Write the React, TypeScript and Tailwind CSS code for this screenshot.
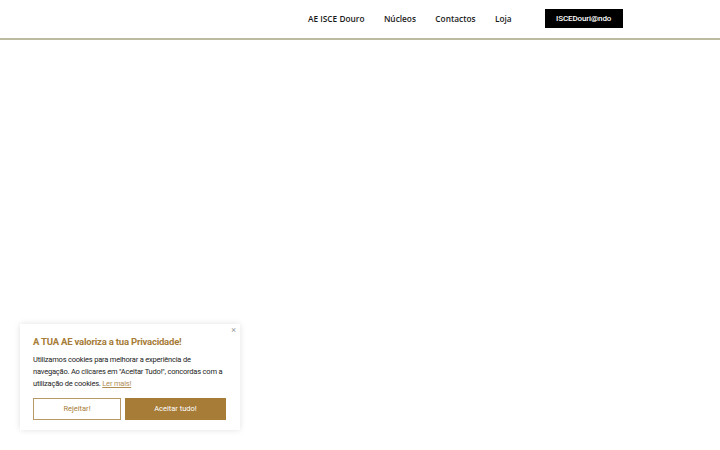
import React from 'react';

export default function App() {
  const nav = ['AE ISCE Douro', 'Núcleos', 'Contactos', 'Loja'];

  return (
    <div className="relative w-[720px] h-[450px] bg-white overflow-hidden font-['Roboto',sans-serif]">
      {/* header */}
      <header className="h-[40px] border-b-2 border-[#bcbb9f] flex items-center">
        <nav className="flex items-center ml-[308px] gap-[19.4px] font-['Open_Sans',sans-serif] font-semibold text-[8.3px] text-[#1a1a1a]">
          {nav.map((item) => (
            <a key={item} className="leading-none">{item}</a>
          ))}
        </nav>
        <button className="ml-[33px] w-[78px] h-[19px] bg-black text-white text-[8px] font-medium flex items-center justify-center mt-[-1px] tracking-[-0.1px]">
          ISCEDouri@ndo
        </button>
      </header>

      {/* cookie notice */}
      <div className="absolute left-[20px] top-[324px] w-[220px] h-[106px] bg-white shadow-[0_0_6px_rgba(0,0,0,0.12)] px-[13px] pt-[12px]">
        <button className="absolute right-[4px] top-[2px] text-[9px] text-[#9a9a9a] leading-none">×</button>
        <h2 className="text-[9.5px] font-bold text-[#a67c37] leading-[12px] tracking-[-0.2px]">A TUA AE valoriza a tua Privacidade!</h2>
        <p className="mt-[6px] text-[7.5px] leading-[12px] text-[#222] tracking-[-0.2px] pr-[2px]">
          Utilizamos cookies para melhorar a experiência de navegação. Ao clicares em "Aceitar Tudo!", concordas com a utilização de cookies.{' '}
          <a className="text-[#b08d55] underline">Ler mais!</a>
        </p>
        <div className="mt-[8px] flex gap-[4px]">
          <button className="w-[88px] h-[22px] border border-[#b89866] text-[#a67c37] text-[7.5px]">Rejeitar!</button>
          <button className="w-[101px] h-[22px] bg-[#a67c37] text-white text-[7.5px]">Aceitar tudo!</button>
        </div>
      </div>
    </div>
  );
}
